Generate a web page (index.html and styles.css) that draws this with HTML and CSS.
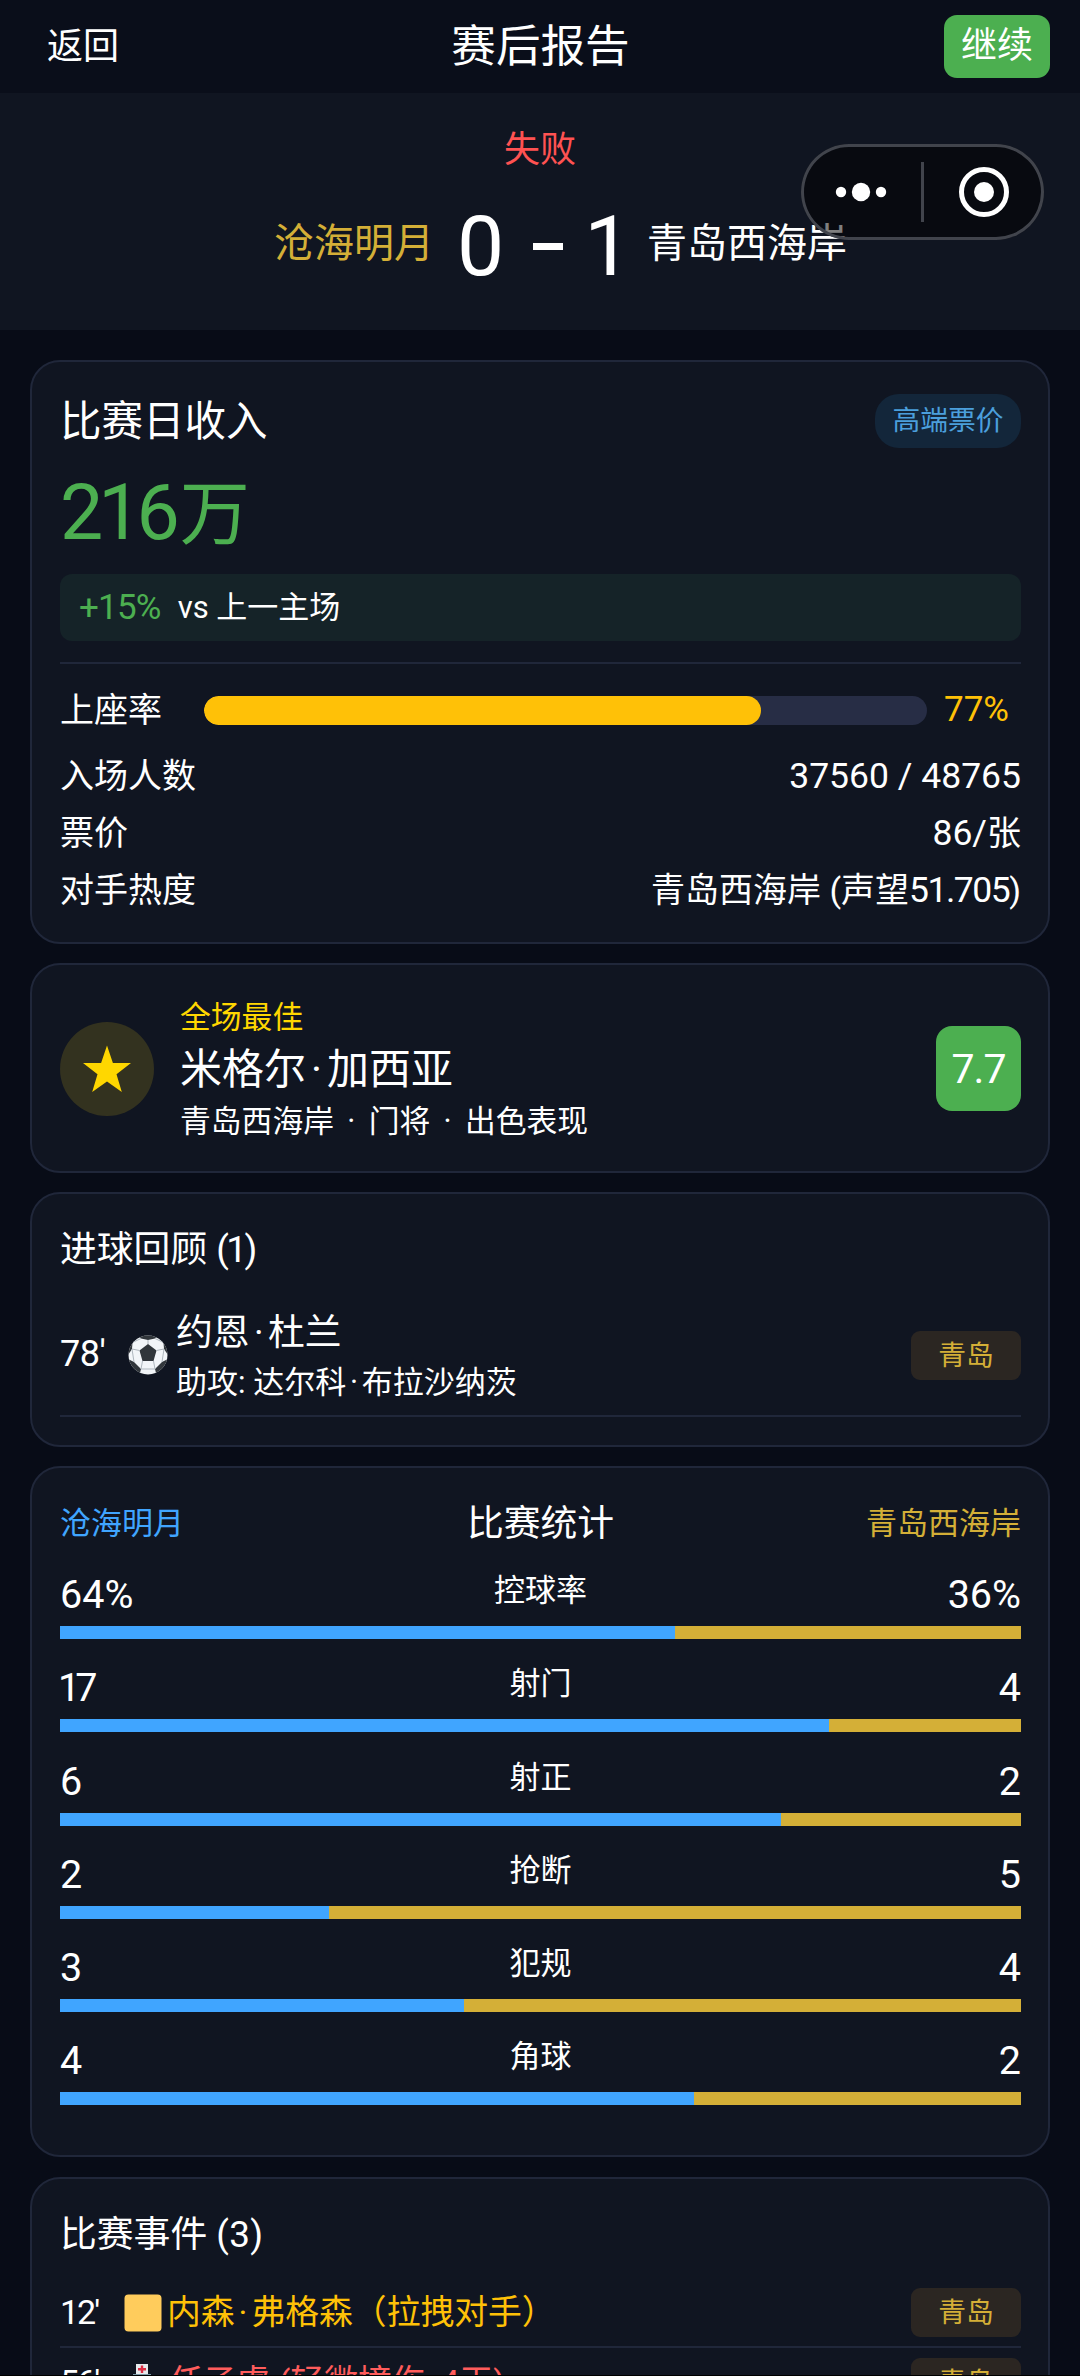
FILE: index.html
```html
<!DOCTYPE html>
<html lang="zh-CN">
<head>
<meta charset="utf-8">
<title>赛后报告</title>
<link rel="stylesheet" href="styles.css">
</head>
<body>
<div class="screen">
  <header class="topbar">
    <span class="back">返回</span>
    <h1 class="page-title">赛后报告</h1>
    <button class="continue">继续</button>
  </header>

  <section class="result">
    <div class="outcome">失败</div>
    <div class="scoreline">
      <span class="home-name">沧海明月</span>
      <span class="score"><span class="goals-for">0</span><i class="dash"></i><span class="goals-against">1</span></span>
      <span class="away-name">青岛西海岸</span>
    </div>
  </section>

  <div class="capsule">
    <svg width="243" height="96" viewBox="0 0 243 96">
      <g fill="#fff">
        <circle cx="40" cy="48" r="5.2"/><circle cx="60" cy="48" r="9.2"/><circle cx="80" cy="48" r="5.2"/>
        <circle cx="183" cy="48" r="10"/>
      </g>
      <circle cx="183" cy="48" r="22.5" fill="none" stroke="#fff" stroke-width="5"/>
      <rect x="120" y="18" width="3" height="60" fill="#41444c"/>
    </svg>
  </div>

  <main class="cards">
    <section class="card revenue">
      <div class="revenue-head">
        <h2 class="big-title">比赛日收入</h2>
        <span class="price-badge">高端票价</span>
      </div>
      <div class="amount"><span class="digits">216</span>万</div>
      <div class="compare"><span class="up">+15%</span><span>vs 上一主场</span></div>
      <div class="line"></div>
      <div class="occupancy">
        <span class="occ-label">上座率</span>
        <div class="track"><div class="fill" style="width:77%"></div></div>
        <span class="occ-value">77%</span>
      </div>
      <div class="info"><span>入场人数</span><span class="num">37560 / 48765</span></div>
      <div class="info"><span>票价</span><span><span class="num">86/</span>张</span></div>
      <div class="info"><span>对手热度</span><span>青岛西海岸 (声望<span class="num tight">51.705</span>)</span></div>
    </section>

    <section class="card mvp">
      <div class="avatar">
        <svg width="50" height="48" viewBox="0 0 50 48"><path fill="#ffd700" d="M25 0.5 30.9 18H49L34.500 29.200 39.800 47 25 36.500 10.200 47 15.500 29.200 1 18H19.100Z"/></svg>
      </div>
      <div class="mvp-text">
        <div class="mvp-tag">全场最佳</div>
        <div class="mvp-name">米格尔<b class="dot">·</b>加西亚</div>
        <div class="mvp-sub">青岛西海岸 <b class="dot">·</b> 门将 <b class="dot">·</b> 出色表现</div>
      </div>
      <div class="rating">7.7</div>
    </section>

    <section class="card goals">
      <h2 class="title">进球回顾 <span class="count-one">(1)</span></h2>
      <div class="goal">
        <span class="minute">78'</span>
        <svg class="ball" width="40" height="40" viewBox="0 0 40 40">
          <defs><clipPath id="ball-edge"><circle cx="20" cy="20" r="19.500"/></clipPath></defs>
          <circle cx="20" cy="20" r="19.500" fill="#f2f5f8"/>
          <g clip-path="url(#ball-edge)">
            <g fill="#31363b">
              <path d="M20 9 28.500 15.500 25.500 26H14.500L11.500 15.500Z"/>
              <path d="M10 0H30L27 3.500 20 5 13 3.500Z"/>
              <path d="M0 8 4.500 7.500 4 14 0 20Z"/>
              <path d="M40 8 35.500 7.500 36 14 40 20Z"/>
              <path d="M0 24 6 27 13 34 11.500 40H0Z"/>
              <path d="M40 24 34 27 27 34 28.500 40H40Z"/>
            </g>
            <g stroke="#aeb6bd" stroke-width="1" fill="none">
              <path d="M20 9V5M28.500 15.500 36 14M25.500 26 27 34M14.500 26 13 34M11.500 15.500 4 14M13 34H27M4 14 6 27M36 14 34 27M4.500 7.500 13 3.500M35.500 7.500 27 3.500"/>
            </g>
          </g>
        </svg>
        <div class="goal-text">
          <div class="scorer">约恩<b class="dot">·</b>杜兰</div>
          <div class="assist">助攻: 达尔科<b class="dot">·</b>布拉沙纳茨</div>
        </div>
        <span class="team-tag">青岛</span>
      </div>
    </section>

    <section class="card stats">
      <div class="stats-head">
        <span class="home">沧海明月</span>
        <h2 class="title">比赛统计</h2>
        <span class="away">青岛西海岸</span>
      </div>
      <div class="stat">
        <div class="stat-row"><span>64%</span><span class="stat-label">控球率</span><span>36%</span></div>
        <div class="split"><div class="split-home" style="width:64%"></div></div>
      </div>
      <div class="stat">
        <div class="stat-row"><span class="seventeen">17</span><span class="stat-label">射门</span><span>4</span></div>
        <div class="split"><div class="split-home" style="width:80%"></div></div>
      </div>
      <div class="stat">
        <div class="stat-row"><span>6</span><span class="stat-label">射正</span><span>2</span></div>
        <div class="split"><div class="split-home" style="width:75%"></div></div>
      </div>
      <div class="stat">
        <div class="stat-row"><span>2</span><span class="stat-label">抢断</span><span>5</span></div>
        <div class="split"><div class="split-home" style="width:28%"></div></div>
      </div>
      <div class="stat">
        <div class="stat-row"><span>3</span><span class="stat-label">犯规</span><span>4</span></div>
        <div class="split"><div class="split-home" style="width:42%"></div></div>
      </div>
      <div class="stat">
        <div class="stat-row"><span>4</span><span class="stat-label">角球</span><span>2</span></div>
        <div class="split"><div class="split-home" style="width:66%"></div></div>
      </div>
    </section>

    <section class="card events">
      <h2 class="title">比赛事件 <span class="count">(3)</span></h2>
      <div class="event">
        <span class="event-minute">12'</span>
        <svg class="event-icon" width="38" height="38" viewBox="0 0 38 38"><rect x="0.500" y="0.500" width="37" height="37" rx="4" fill="#ffcc5c"/></svg>
        <span class="event-text booked">内森<b class="dot">·</b>弗格森（拉拽对手）</span>
        <span class="team-tag">青岛</span>
      </div>
      <div class="event">
        <span class="event-minute">56'</span>
        <svg class="event-icon" width="38" height="38" viewBox="0 0 38 38">
          <path fill="#e6e9ec" d="M12 0H24V12H36V38H2V12H12Z"/>
          <path fill="#7d9aa8" d="M9 10H27V13H9Z"/>
          <path fill="#dd2e44" d="M16.800 1.500H19.200V4H22V6.400H19.200V9H16.800V6.400H14V4H16.800Z"/>
        </svg>
        <span class="event-text injured">任子虞 (轻微撞伤, 4天)</span>
        <span class="team-tag">青岛</span>
      </div>
    </section>
  </main>
</div>
</body>
</html>
```

FILE: styles.css
```css
* { box-sizing: border-box; }

body {
  margin: 0;
  background: #000;
  color: #fff;
  font-family: Roboto, "Noto Sans CJK SC", sans-serif;
  font-size: 34px;
  line-height: 1.2;
  white-space: nowrap;
}

h1, h2 { margin: 0; font-weight: 400; }
.dot { display: inline-block; width: 0.5em; text-align: center; font-weight: 400; }

.screen {
  position: relative;
  height: 2375px;
  overflow: hidden;
  background: #080c17;
}

/* Top bar */
.topbar {
  height: 93px;
  padding: 0 30px 0 47px;
  display: grid;
  grid-template-columns: 1fr auto 1fr;
  align-items: center;
  background: #0a0e1a;
}
.back { font-size: 36px; line-height: 40px; }
.page-title { font-size: 44.6px; line-height: 50px; margin-left: -16px; }
.continue {
  justify-self: end;
  width: 106px;
  height: 63px;
  padding: 0;
  border: 0;
  border-radius: 13px;
  background: #4caf50;
  color: #fff;
  font: inherit;
  font-size: 36px;
  line-height: 63px;
}

/* Final score */
.result { height: 237px; background: #101521; padding-top: 36px; }
.outcome {
  font-size: 36px;
  line-height: 42px;
  text-align: center;
  color: #ff5252;
}
.scoreline {
  display: flex;
  align-items: center;
  height: 84px;
  margin-top: 31px;
  padding-left: 274px;
  font-size: 40px;
}
.home-name { width: 183px; color: #d4af37; }
.score { display: flex; align-items: center; width: 190px; padding-top: 5px; font-size: 84px; line-height: 84px; }
.dash { width: 30px; height: 7px; margin: 0 21px 0 29px; background: #fff; }

.capsule {
  position: absolute;
  top: 144px;
  left: 801px;
  width: 243px;
  height: 96px;
  border-radius: 48px;
  background: rgba(0, 0, 0, 0.5);
  box-shadow: inset 0 0 0 3px #41444c;
}
.capsule svg { display: block; }

/* Cards */
.cards { padding: 30px 30px 0; display: flex; flex-direction: column; gap: 19px; }
.card {
  border: 2px solid #20273a;
  border-radius: 30px;
  background: #101521;
  padding: 0 27px 0 28px;
}
.title { font-size: 36.8px; line-height: 44px; }
.count { letter-spacing: 0.3px; }
.count-one { letter-spacing: -2.6px; }
.line { height: 2px; background: #20273a; }

/* Match-day revenue */
.revenue { height: 584px; padding-top: 32px; }
.revenue-head { display: flex; justify-content: space-between; align-items: center; height: 54px; }
.big-title { font-size: 41.5px; line-height: 52px; padding-top: 1px; }
.price-badge {
  width: 146px;
  height: 54px;
  border-radius: 24px;
  background: #13263a;
  color: #4b9fdc;
  font-size: 27.8px;
  line-height: 54px;
  text-align: center;
}
.amount { height: 80px; font-size: 70px; line-height: 78px; margin-top: 26px; color: #4caf50; }
.digits { font-size: 77px; letter-spacing: -5px; margin-right: 5px; }
.compare {
  display: flex;
  align-items: center;
  height: 67px;
  margin-top: 20px;
  padding: 0 19px;
  gap: 17px;
  border-radius: 12px;
  background: #152328;
  font-size: 31px;
}
.up { color: #4caf50; font-size: 35px; letter-spacing: -0.8px; }
.compare + .line { margin-top: 21px; }
.occupancy { display: flex; align-items: center; height: 54px; margin-top: 19px; }
.occ-label { width: 144px; }
.track { width: 723px; height: 29px; border-radius: 14.5px; background: #272d45; overflow: hidden; }
.fill { height: 100%; border-radius: 14.5px; background: #ffc107; }
.occ-value { margin-left: 17px; font-size: 35px; color: #ffc107; }
.info { display: flex; justify-content: space-between; height: 57px; line-height: 57px; }
.occupancy + .info { margin-top: 11px; }
.num { font-size: 35.5px; }
.tight { letter-spacing: -1.5px; }

/* Best player */
.mvp { height: 210px; display: flex; align-items: center; padding-top: 1px; }
.avatar {
  display: grid;
  place-items: center;
  width: 94px;
  height: 94px;
  border-radius: 50%;
  background: #33321f;
}
.mvp-text { flex: 1; margin-left: 26px; padding-top: 2px; }
.mvp-tag { font-size: 30.8px; line-height: 46px; color: #ffd700; }
.mvp-name { font-size: 42px; line-height: 58px; }
.mvp-sub { font-size: 30.8px; line-height: 46px; word-spacing: 2px; }
.rating {
  width: 85px;
  height: 85px;
  border-radius: 16px;
  background: #4caf50;
  font-size: 41px;
  line-height: 87px;
  text-align: center;
  letter-spacing: -1px;
}

/* Goals */
.goals { height: 255px; padding-top: 34px; }
.goal { display: flex; align-items: center; height: 123px; margin-top: 22px; padding-top: 1px; border-bottom: 2px solid #20273a; }
.minute { width: 68px; font-size: 36px; letter-spacing: -0.5px; }
.goal-text { flex: 1; margin-left: 8px; padding-top: 5px; }
.scorer { font-size: 36.8px; line-height: 50px; }
.assist { font-size: 31px; line-height: 50px; }
.team-tag {
  width: 110px;
  height: 49px;
  border-radius: 9px;
  background: #2b2622;
  color: #d4af37;
  font-size: 27.8px;
  line-height: 50px;
  text-align: center;
}

/* Match statistics */
.stats { height: 691px; padding-top: 34px; }
.stats-head { display: grid; grid-template-columns: 1fr auto 1fr; align-items: center; font-size: 31px; height: 44px; }
.home { color: #40a5ff; }
.away { color: #d4af37; text-align: right; }
.stat { height: 93.3px; }
.stats-head + .stat { margin-top: 23px; }
.stat-row { display: grid; grid-template-columns: 1fr auto 1fr; height: 57px; line-height: 51px; font-size: 39.5px; }
.stat-row span:last-child { text-align: right; }
.stat-row .stat-label { font-size: 31px; line-height: 43px; }
.seventeen { letter-spacing: -5px; margin-left: -2px; }
.split { display: flex; height: 13px; background: #d4af37; }
.split-home { background: #40a5ff; }

/* Match events */
.events { height: 330px; margin-top: 1px; padding-top: 34px; }
.event { display: flex; align-items: center; height: 70px; padding-top: 1px; border-bottom: 2px solid #20273a; }
.events .title + .event { margin-top: 21px; }
.event-minute { width: 64px; font-size: 34px; letter-spacing: -2px; }
.event-text { flex: 1; margin-left: 5px; padding-top: 2px; font-size: 33.8px; }
.booked { color: #ffc107; }
.injured { margin-left: 7px; color: #ff5c5c; }
```
